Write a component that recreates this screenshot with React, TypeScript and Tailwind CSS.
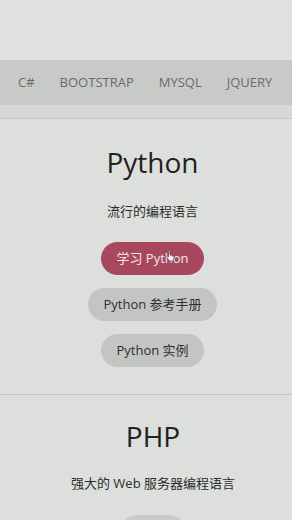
import React from "react";

const latin = { fontFamily: '"Open Sans", "Noto Sans CJK SC", sans-serif' };

function PillButton({ label, primary }: { label: string; primary?: boolean }) {
  return (
    <div
      className={`rounded-full h-[33px] flex items-center justify-center text-[13px] px-[15px] ${
        primary ? "bg-[#a8485f] text-[#f3e6ea]" : "bg-[#c3c5c3] text-[#2e302e]"
      }`}
    >
      {label}
    </div>
  );
}

export default function App() {
  return (
    <div className="w-[292px] h-[520px] overflow-hidden bg-[#dcdfdc] relative" style={latin}>
      {/* top blank area */}
      <div className="h-[60px] bg-[#dfe1df]" />

      {/* nav */}
      <div className="h-[45px] bg-[#c8cac8] flex items-center pl-[18px] gap-[25px] text-[13px] text-[#686a68] whitespace-nowrap">
        <span>C#</span>
        <span>BOOTSTRAP</span>
        <span>MYSQL</span>
        <span>JQUERY</span>
      </div>
      <div className="h-[14px] bg-[#d6d9d6] border-b border-[#c4c7c4]" />

      {/* Python */}
      <section className="flex flex-col items-center pl-[13px] pt-[26px] pb-[27px] border-b border-[#c2c5c2]">
        <h1 className="text-[28px] leading-[34px] text-[#1f211f]">Python</h1>
        <p className="mt-[23px] text-[13px] leading-[18px] text-[#2a2c2a]">流行的编程语言</p>
        <div className="mt-[22px] flex flex-col items-center gap-[13px]">
          <div className="relative">
            <PillButton label="学习 Python" primary />
            <svg
              className="absolute left-[65px] top-[7px]"
              width="9"
              height="13"
              viewBox="0 0 9 13"
            >
              <path
                d="M2.5 1.5v6.5L1.4 7c-.6-.5-1.3.1-.9.7l2.2 3.6c.3.5.8.7 1.3.7h2.3c.9 0 1.6-.7 1.6-1.6V7.3c0-.5-.4-.8-.8-.8s-.8.3-.8.8V6.6c0-.5-.4-.8-.8-.8s-.8.3-.8.8v-.3c0-.4-.4-.8-.8-.8V1.5c0-.5-.3-.8-.7-.8s-.7.3-.7.8z"
                fill="#f4eef0"
                stroke="#5a3a44"
                strokeWidth="0.7"
              />
            </svg>
          </div>
          <PillButton label="Python 参考手册" />
          <PillButton label="Python 实例" />
        </div>
      </section>

      {/* PHP */}
      <section className="flex flex-col items-center pl-[14px] pt-[24px]">
        <h1 className="text-[28px] leading-[34px] text-[#1f211f]">PHP</h1>
        <p className="mt-[21px] text-[13px] leading-[18px] text-[#2a2c2a]">强大的 Web 服务器编程语言</p>
        <div className="mt-[23px] w-[70px] h-[20px] rounded-t-full bg-[#c9cbc9]" />
      </section>
    </div>
  );
}
